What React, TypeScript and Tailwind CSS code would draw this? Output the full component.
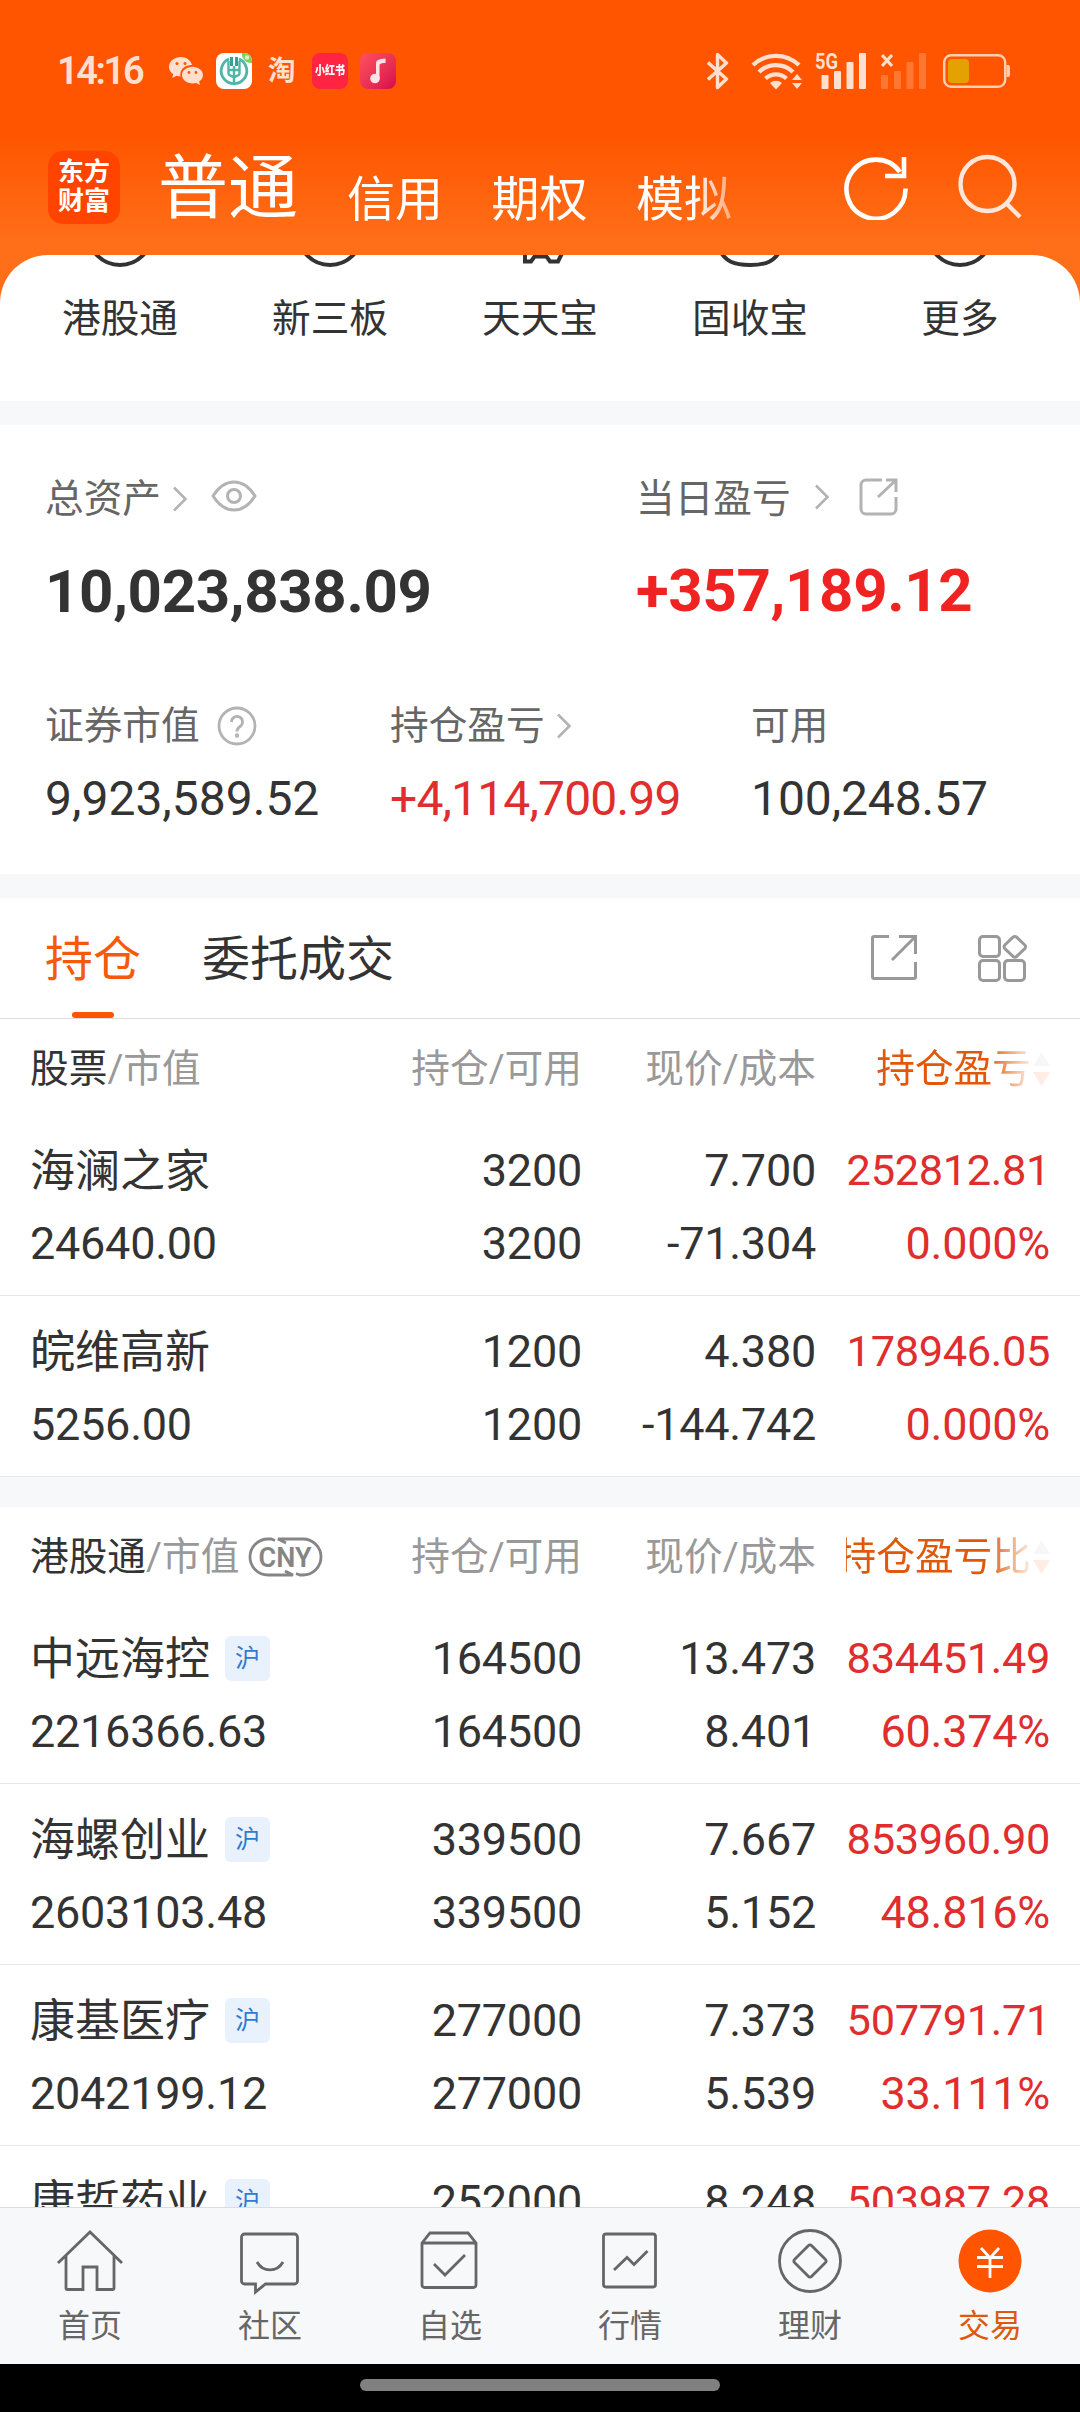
import React from "react";

const FONT = "font-[Roboto,'Noto_Sans_CJK_SC',sans-serif]";

function StatusBar() {
  return (
    <div className="flex h-[142px] shrink-0 items-center pl-[57px] pr-[69px] text-[#ffdfce]">
      <span className="w-[112px] text-[38px] font-semibold leading-[40px] tracking-[-2.4px]">14:16</span>
      <svg width="35" height="30" viewBox="0 0 35 30" fill="currentColor">
        <path d="M12 1C5.400 1 0 5.300 0 10.800c0 3 1.600 5.700 4.200 7.500L3.200 22l4.300-2.200c1.300.4 2.500.6 4 .7A10 10 0 0 1 11.300 18.500c0-5.400 5-9.400 11-9.400h.8C21.900 4.400 17.300 1 12 1Z" />
        <path d="M34 19c0-4.700-4.900-8.300-10.500-8.300S13 14.300 13 19s4.700 8.400 10.500 8.400c1.300 0 2.500-.2 3.600-.5l4 2.100-1-3.400C32.500 24 34 21.600 34 19Z" />
        <g fill="#ff5500"><circle cx="8" cy="7.600" r="1.500" /><circle cx="16" cy="7.600" r="1.500" /><circle cx="20" cy="16.500" r="1.400" /><circle cx="27" cy="16.500" r="1.400" /></g>
      </svg>
      <svg className="ml-[12px]" width="36" height="36" viewBox="0 0 36 36" fill="none">
        <rect width="36" height="36" rx="8" fill="#fff" />
        <path d="M26 0h2a8 8 0 0 1 8 8v2a9 9 0 0 1-10-10Z" fill="#7ed15c" />
        <circle cx="31" cy="4.500" r="2.200" fill="#d6f5c8" />
        <path d="M13 6A12.800 12.800 0 1 0 23 6" stroke="#4fb5a6" strokeWidth="2.800" />
        <path d="M15.500 4v9M20.500 4v9" stroke="#3aa093" strokeWidth="3" />
        <path d="M18 13v18M12.500 8v13c0 1 2 1.500 5.500 3.500 3.500-2 5.500-2.500 5.500-3.500V8M13 17h10" stroke="#4fb5a6" strokeWidth="2.400" />
      </svg>
      <span className="ml-[16px] w-[30px] text-[27.500px] font-bold leading-[36px]">淘</span>
      <span className="ml-[14px] flex h-[36px] w-[36px] items-center justify-center rounded-[8px] bg-[#ff2442] text-white">
        <span className="scale-y-[1.25] text-[10px] font-black leading-none">小红书</span>
      </span>
      <span className="ml-[12px] flex h-[36px] w-[36px] items-center justify-center rounded-[8px] bg-linear-to-br from-[#ff5060] to-[#d8004c]">
        <svg width="18" height="26" viewBox="0 0 18 26" fill="#ffe3e6">
          <circle cx="6" cy="20.500" r="4.800" />
          <path d="M7 20V5.500C7 2 10 1 16.500 0.500V5c-3.500 0-6 .5-6 2.500V21Z" />
        </svg>
      </span>
      <div className="ml-auto flex items-center">
        <svg width="22" height="38" viewBox="0 0 22 38" fill="none" stroke="currentColor" strokeWidth="3.400" strokeLinejoin="round">
          <path d="M1 10.500 19.500 27 10.500 35.500V2.500L19.500 11 1 27.500" />
        </svg>
        <svg className="ml-[22px]" width="52" height="38" viewBox="0 0 52 38" fill="none" stroke="currentColor" strokeWidth="4.400">
          <path d="M2 13a33.500 33.500 0 0 1 46 0M8 20a24.500 24.500 0 0 1 34 0M14.500 26.500a15.500 15.500 0 0 1 21 0" />
          <path d="M25 37.500l-6-6.500a9 9 0 0 1 12 0Z" fill="currentColor" stroke="none" />
          <path d="M46 22l5 6H41ZM46 37l-5-6h10Z" fill="currentColor" stroke="none" />
        </svg>
        <svg className="ml-[12px]" width="54" height="38" viewBox="0 0 54 38" fill="currentColor">
          <text x="0" y="17" fontSize="22" fontWeight="700" textLength="23" lengthAdjust="spacingAndGlyphs">5G</text>
          <rect x="6.500" y="23" width="7" height="14" rx="1" />
          <rect x="19" y="19" width="7" height="18" rx="1" />
          <rect x="31.500" y="10" width="7" height="27" rx="1" />
          <rect x="44" y="1" width="7" height="36" rx="1" />
        </svg>
        <svg className="ml-[12px]" width="48" height="38" viewBox="0 0 48 38" fill="#ff7733">
          <path d="M1 3l10 11M11 3 1 14" stroke="#ffdfce" strokeWidth="3.200" />
          <rect x="0" y="23" width="7" height="14" rx="1" />
          <rect x="13" y="19" width="7" height="18" rx="1" />
          <rect x="25.500" y="10" width="7" height="27" rx="1" />
          <rect x="38" y="1" width="7" height="36" rx="1" />
        </svg>
        <svg className="ml-[14px]" width="68" height="34" viewBox="0 0 68 34" fill="none">
          <rect x="1.200" y="1.200" width="61" height="31.600" rx="7" stroke="#ffcfb0" strokeWidth="2.400" />
          <rect x="5" y="5" width="21" height="24" rx="4" fill="#e5a100" />
          <path d="M63.500 11h1.500a2 2 0 0 1 2 2v8a2 2 0 0 1-2 2h-1.500Z" fill="#ffcfb0" />
        </svg>
      </div>
    </div>
  );
}

function TitleBar() {
  return (
    <div className="flex h-[113px] shrink-0 items-center pb-[23px] pl-[48px] pr-[58px] text-white">
      <div className="flex h-[73px] w-[72px] flex-col items-center justify-center rounded-[15px] bg-[#ff4400] text-[26px] font-bold leading-[29px]">
        <span>东方</span>
        <span>财富</span>
      </div>
      <span className="ml-[38px] mt-[3px] text-[70px] leading-[80px]">普通</span>
      <div className="ml-[49px] mt-[25px] flex w-[430px] gap-[48.500px] overflow-hidden whitespace-nowrap text-[48px] leading-[60px] [mask-image:linear-gradient(to_right,#000_345px,transparent_415px)]">
        <span>信用</span>
        <span>期权</span>
        <span>模拟</span>
      </div>
      <svg className="ml-auto" width="64" height="66" viewBox="0 0 64 66" fill="none" stroke="currentColor" strokeWidth="4.600">
        <path d="M61.500 34.500A29.500 29.500 0 1 1 56 18" />
        <path d="M60 3v19H41" />
      </svg>
      <svg className="ml-[50px] mb-[2px]" width="64" height="66" viewBox="0 0 64 66" fill="none" stroke="#ffe6d8" strokeWidth="4.400">
        <circle cx="29.500" cy="31" r="27" />
        <path d="M48 50l14 14" />
      </svg>
    </div>
  );
}

const shortcuts = ["港股通", "新三板", "天天宝", "固收宝", "更多"];

function ShortcutIcon({ index }: { index: number }) {
  return (
    <svg className="h-[14px] w-[80px]" viewBox="0 0 80 14" fill="none" stroke="#333" strokeWidth="4">
      {index === 2 ? (
        <path d="M25 -4V6.500h6l3.500-5h12l3.500 5h8l6-12M34 1h14" />
      ) : index === 3 ? (
        <path d="M10 -4C16 6 23 10 40 10S64 6 70 -4" />
      ) : (
        <circle cx="40" cy="-22" r="32" />
      )}
    </svg>
  );
}

function Shortcuts() {
  return (
    <div className="flex h-[146px] shrink-0 overflow-hidden rounded-t-[48px] bg-white px-[15px]">
      {shortcuts.map((label, i) => (
        <div key={label} className="flex w-[210px] flex-col items-center">
          <ShortcutIcon index={i} />
          <span className="mt-[25px] text-[38.700px] leading-[50px] text-[#333]">{label}</span>
        </div>
      ))}
    </div>
  );
}

function Chevron({ className }: { className: string }) {
  return (
    <svg className={className} width="16" height="26" viewBox="0 0 16 26" fill="none" stroke="#b3b3b3" strokeWidth="2.600">
      <path d="M2 1.500 13.500 13 2 24.500" />
    </svg>
  );
}

function Assets() {
  return (
    <div className="h-[449px] shrink-0 bg-white pl-[45px] text-[38.700px] leading-[50px] text-[#666]">
      <div className="flex pt-[49px]">
        <div className="w-[591px]">
          <div className="flex h-[50px] items-center">
            <span>总资产</span>
            <Chevron className="ml-[11px]" />
            <svg className="ml-[23px] mb-[6px]" width="46" height="32" viewBox="0 0 46 32" fill="none" stroke="#b3b3b3" strokeWidth="3">
              <path d="M2 16C8 6.500 14 2 23 2s15 4.500 21 14c-6 9.500-12 14-21 14S8 25.500 2 16Z" />
              <circle cx="23" cy="16" r="6.500" />
            </svg>
          </div>
          <div className="mt-[33px] text-[60px] font-bold leading-[70px] tracking-[-0.350px] text-[#333]">10,023,838.09</div>
        </div>
        <div>
          <div className="flex h-[50px] items-center">
            <span>当日盈亏</span>
            <Chevron className="ml-[23px] mb-[4px]" />
            <svg className="ml-[28px] mb-[5px]" width="42" height="40" viewBox="0 0 42 40" fill="none" stroke="#b3b3b3" strokeWidth="3">
              <path d="M24 3H8a5 5 0 0 0-5 5v24a5 5 0 0 0 5 5h25a5 5 0 0 0 5-5V20M28 3h10v12M38 3 20 20" />
            </svg>
          </div>
          <div className="mt-[32px] text-[60px] font-bold leading-[70px] tracking-[-0.350px] text-[#f02323]">+357,189.12</div>
        </div>
      </div>
      <div className="flex pt-[74px]">
        <div className="w-[345px]">
          <div className="flex h-[50px] items-center">
            <span>证券市值</span>
            <svg className="ml-[16px]" width="42" height="42" viewBox="0 0 42 42" fill="none" stroke="#b3b3b3" strokeWidth="2.800">
              <circle cx="21" cy="21" r="18" />
              <path d="M15.500 17a5.500 5.500 0 1 1 8.500 4.500c-2 1.300-3 2.300-3 5" />
              <circle cx="21" cy="30.500" r="0.800" fill="#b3b3b3" />
            </svg>
          </div>
          <div className="mt-[18px] text-[48px] leading-[60px] text-[#333]">9,923,589.52</div>
        </div>
        <div className="w-[361px]">
          <div className="flex h-[50px] items-center">
            <span>持仓盈亏</span>
            <Chevron className="ml-[11px]" />
          </div>
          <div className="mt-[18px] text-[48px] leading-[60px] tracking-[-0.850px] text-[#e02d2d]">+4,114,700.99</div>
        </div>
        <div>
          <div className="h-[50px]">可用</div>
          <div className="mt-[18px] text-[48px] leading-[60px] tracking-[-0.100px] text-[#333]">100,248.57</div>
        </div>
      </div>
    </div>
  );
}

function Tabs() {
  return (
    <div className="flex h-[121px] shrink-0 border-b border-[#dcdcdc] bg-white pl-[45px] pr-[51px] text-[48px]">
      <div className="flex flex-col items-center justify-between text-[#f55a0a]">
        <span className="mt-[32px] leading-[60px]">持仓</span>
        <span className="h-[6px] w-[42px] rounded-[3px] bg-[#ff5500]" />
      </div>
      <span className="ml-[61px] mt-[32px] leading-[60px] text-[#333]">委托成交</span>
      <svg className="ml-auto mt-[35px]" width="50" height="50" viewBox="0 0 50 50" fill="none" stroke="#999" strokeWidth="3">
        <path d="M20 3.500H5a1.500 1.500 0 0 0-1.500 1.500v39A1.500 1.500 0 0 0 5 45.500h40a1.500 1.500 0 0 0 1.500-1.500V29M30 3.500h16.500V21M46.500 3.500 23 27" />
      </svg>
      <svg className="ml-[58px] mt-[36px]" width="52" height="50" viewBox="0 0 52 50" fill="none" stroke="#999" strokeWidth="3">
        <rect x="2.500" y="2.500" width="20" height="20" rx="3.500" />
        <rect x="2.500" y="26.500" width="20" height="20" rx="3.500" />
        <rect x="27.500" y="26.500" width="20" height="20" rx="3.500" />
        <path d="M36 3.200a2.500 2.500 0 0 1 3.600 0l8.200 7.800a2.500 2.500 0 0 1 0 3.600l-8.200 7.800a2.500 2.500 0 0 1-3.600 0l-8.200-7.800a2.500 2.500 0 0 1 0-3.600Z" />
      </svg>
    </div>
  );
}

const COLS = "grid grid-cols-[350px_202px_234px_234px]";

function TableHead({ name, profit, cny }: { name: string; profit: string; cny?: boolean }) {
  return (
    <div className={`${COLS} h-[96px] items-start pl-[30px] pt-[25px] text-right text-[38.700px] leading-[50px] text-[#999]`}>
      <div className="flex h-[50px] items-center whitespace-nowrap">
        <span className="text-[#333]">{name}</span>
        <span>/市值</span>
        {cny && (
          <svg className="ml-[9px] shrink-0" width="75" height="42" viewBox="0 0 75 42" fill="none" stroke="#858585" strokeWidth="2.800">
            <path d="M27 4.500 23 3H20A18 18 0 0 0 20 39H45L37 35M48 37.500 52 39H55A18 18 0 0 0 55 3H30l8 4" />
            <text x="10.500" y="30.500" fontSize="27" fontWeight="600" fill="#858585" stroke="none" textLength="53" lengthAdjust="spacingAndGlyphs">CNY</text>
          </svg>
        )}
      </div>
      <span className="whitespace-nowrap">持仓/可用</span>
      <span className="whitespace-nowrap">现价/成本</span>
      <div className="ml-[30px] flex h-[50px] items-center justify-end overflow-hidden whitespace-nowrap text-[#e0590a]">
        <span className="[mask-image:linear-gradient(to_left,rgba(0,0,0,0.100)_0,#000_44px)]">{profit}</span>
        <svg className="ml-[2px] shrink-0" width="17" height="36" viewBox="0 0 17 36">
          <path d="M8.500 1 17 15H0Z" fill="#f6f7f8" />
          <path d="M8.500 35 0 21h17Z" fill="#ffece2" />
        </svg>
      </div>
    </div>
  );
}

type Holding = {
  name: string;
  value: string;
  held: string;
  price: string;
  cost: string;
  profit: string;
  rate: string;
  hk?: boolean;
};

const stocks: Holding[] = [
  { name: "海澜之家", value: "24640.00", held: "3200", price: "7.700", cost: "-71.304", profit: "252812.81", rate: "0.000%" },
  { name: "皖维高新", value: "5256.00", held: "1200", price: "4.380", cost: "-144.742", profit: "178946.05", rate: "0.000%" },
];

const hkStocks: Holding[] = [
  { name: "中远海控", value: "2216366.63", held: "164500", price: "13.473", cost: "8.401", profit: "834451.49", rate: "60.374%", hk: true },
  { name: "海螺创业", value: "2603103.48", held: "339500", price: "7.667", cost: "5.152", profit: "853960.90", rate: "48.816%", hk: true },
  { name: "康基医疗", value: "2042199.12", held: "277000", price: "7.373", cost: "5.539", profit: "507791.71", rate: "33.111%", hk: true },
];

const lastHolding = { name: "康哲药业", held: "252000", price: "8.248", profit: "503987.28" };

const ROW = `${COLS} auto-rows-[73px] pl-[30px] pt-[19px] text-right text-[45px] leading-[73px] tracking-[-0.250px] text-[#333]`;

function NameCell({ name, hk }: { name: string; hk?: boolean }) {
  return (
    <div className="flex items-center tracking-normal">
      <span className="mt-[2px]">{name}</span>
      {hk && (
        <span className="ml-[15px] flex h-[45px] w-[45px] items-center justify-center rounded-[6px] bg-[#e8f1fc] text-[25px] leading-none text-[#2f7bd0]">沪</span>
      )}
    </div>
  );
}

function HoldingRow({ h }: { h: Holding }) {
  return (
    <div className={`${ROW} h-[181px] border-b border-[#e8e8e8]`}>
      <NameCell name={h.name} hk={h.hk} />
      <span>{h.held}</span>
      <span>{h.price}</span>
      <span className="text-[43.400px] tracking-[-0.350px] text-[#e02d2d]">{h.profit}</span>
      <span className="text-left">{h.value}</span>
      <span>{h.held}</span>
      <span>{h.cost}</span>
      <span className="text-[#e02d2d]">{h.rate}</span>
    </div>
  );
}

const navItems = [
  {
    label: "首页",
    icon: <path d="M2 35 34 4l32 31M10 28v32a1.500 1.500 0 0 0 1.500 1.500H27V39h14v22.500h15.500A1.500 1.500 0 0 0 58 60V28" />,
  },
  {
    label: "社区",
    icon: (
      <>
        <path d="M8 6h50a3 3 0 0 1 3 3v44a3 3 0 0 1-3 3H29l-10 8v-8H8a3 3 0 0 1-3-3V9a3 3 0 0 1 3-3Z" transform="translate(0.500)" />
        <path d="M21 34c6 10.500 20 10.500 26 0" />
      </>
    ),
  },
  {
    label: "自选",
    icon: <path d="M6 15 14 5h38l8 10v42a2.500 2.500 0 0 1-2.500 2.500h-49A2.500 2.500 0 0 1 6 57ZM6 15h54M18 36l11 11 20-20" />,
  },
  {
    label: "行情",
    icon: (
      <>
        <rect x="7.500" y="6" width="52" height="53" rx="2.500" />
        <path d="M18 42l13-12.500 7 7L51.500 23" />
      </>
    ),
  },
  {
    label: "理财",
    icon: (
      <>
        <circle cx="34" cy="33" r="30.500" />
        <path d="M32.500 17.500a2 2 0 0 1 3 0l14 14a2 2 0 0 1 0 3l-14 14a2 2 0 0 1-3 0l-14-14a2 2 0 0 1 0-3Z" />
      </>
    ),
  },
  {
    label: "交易",
    icon: (
      <>
        <circle cx="34" cy="33" r="31.500" fill="#ff5500" stroke="none" />
        <path d="M25 20l9 10 9-10M34 30v20M21 29.500h26M21 38.500h26" stroke="#fff" />
      </>
    ),
  },
];

function BottomNav() {
  return (
    <div className="flex h-[157px] shrink-0 border-t border-[#dcdde0] bg-[#f7f8fa]">
      {navItems.map((item) => (
        <div key={item.label} className={`flex w-[180px] flex-col items-center pt-[20px] ${item.label === "交易" ? "text-[#de5810]" : "text-[#666]"}`}>
          <svg width="68" height="68" viewBox="0 0 68 68" fill="none" stroke="currentColor" strokeWidth="2.800">
            {item.icon}
          </svg>
          <span className="mt-[8px] text-[32px] leading-[44px]">{item.label}</span>
        </div>
      ))}
    </div>
  );
}

export default function App() {
  return (
    <div className={`flex h-[2412px] w-[1080px] flex-col overflow-hidden bg-[linear-gradient(to_bottom,#ff5500_0,#ff5500_135px,#ff6e18_240px)] ${FONT}`}>
      <StatusBar />
      <TitleBar />
      <Shortcuts />
      <div className="h-[24px] shrink-0 bg-[#f7f8fa]" />
      <Assets />
      <div className="h-[24px] shrink-0 bg-[#f7f8fa]" />
      <Tabs />
      <div className="min-h-0 flex-1 overflow-hidden bg-white">
        <TableHead name="股票" profit="持仓盈亏" />
        {stocks.map((h) => (
          <HoldingRow key={h.name} h={h} />
        ))}
        <div className="h-[30px] bg-[#f7f8fa]" />
        <TableHead name="港股通" profit="持仓盈亏比" cny />
        {hkStocks.map((h) => (
          <HoldingRow key={h.name} h={h} />
        ))}
        <div className={ROW}>
          <NameCell name={lastHolding.name} hk />
          <span>{lastHolding.held}</span>
          <span>{lastHolding.price}</span>
          <span className="text-[43.400px] tracking-[-0.350px] text-[#e02d2d]">{lastHolding.profit}</span>
        </div>
      </div>
      <BottomNav />
      <div className="flex h-[48px] shrink-0 justify-center bg-black pt-[15px]">
        <div className="h-[12px] w-[360px] rounded-full bg-[#808080]" />
      </div>
    </div>
  );
}
